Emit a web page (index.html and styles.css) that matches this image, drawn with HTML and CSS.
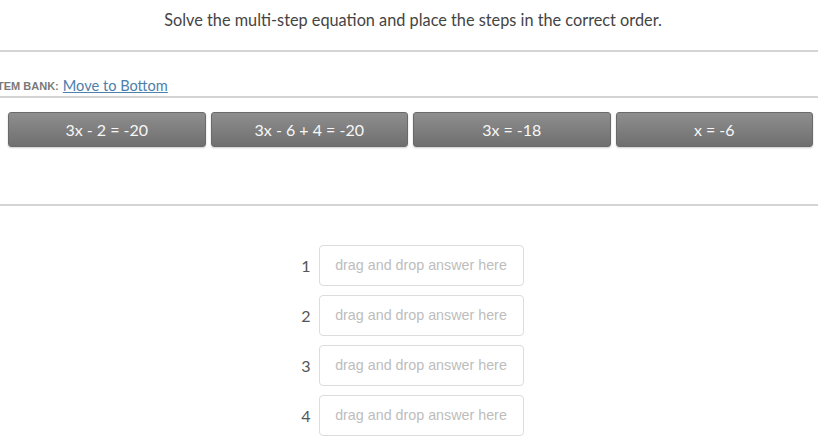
FILE: index.html
```html
<!DOCTYPE html>
<html>
<head>
<meta charset="utf-8">
<link rel="stylesheet" href="styles.css">
</head>
<body>
<div class="page">
  <p class="prompt">Solve the multi-step equation and place the steps in the correct order.</p>
  <hr class="rule">
  <div class="bank-head">
    <span class="bank-label">ITEM BANK:</span>
    <a class="bank-link" href="#">Move to Bottom</a>
  </div>
  <hr class="rule">
  <div class="bank">
    <div class="tile">3x - 2 = -20</div>
    <div class="tile">3x - 6 + 4 = -20</div>
    <div class="tile">3x = -18</div>
    <div class="tile">x = -6</div>
  </div>
  <hr class="rule">
  <ol class="slots">
    <li class="slot"><span class="num">1</span><div class="drop">drag and drop answer here</div></li>
    <li class="slot"><span class="num">2</span><div class="drop">drag and drop answer here</div></li>
    <li class="slot"><span class="num">3</span><div class="drop">drag and drop answer here</div></li>
    <li class="slot"><span class="num">4</span><div class="drop">drag and drop answer here</div></li>
  </ol>
</div>
</body>
</html>
```
FILE: styles.css
```css
html, body {
  margin: 0;
  padding: 0;
  background: #fff;
}
body {
  font-family: Lato, "Open Sans", sans-serif;
  color: #333;
  overflow: hidden;
}
.page {
  width: 818px;
}
.prompt {
  margin: 0;
  padding-top: 9px;
  height: 41px;
  text-align: center;
  font-size: 16.3px;
  line-height: 22px;
  color: #444;
  padding-left: 8px;
}
.rule {
  margin: 0;
  border: 0;
  height: 2px;
  background: #d4d4d4;
}
.bank-head {
  height: 44px;
  display: flex;
  align-items: center;
  margin-left: -6px;
  gap: 4px;
}
.bank-label {
  font-family: "Liberation Sans", Arial, sans-serif;
  font-weight: bold;
  font-size: 11px;
  color: #7a7a7a;
  padding-top: 24px;
}
.bank-link {
  font-size: 14.6px;
  color: #4d80ad;
  text-decoration: underline;
  padding-top: 22px;
}
.bank {
  display: flex;
  gap: 5px;
  padding: 14px 5px 0 8px;
  height: 106px;
  box-sizing: border-box;
}
.tile {
  flex: 1;
  height: 35px;
  box-sizing: border-box;
  border: 1px solid #6a6a6a;
  border-radius: 3px;
  background: linear-gradient(#8e8e8e, #6f6f6f);
  box-shadow: 0 1px 2px rgba(0,0,0,0.2);
  color: #f7f7f7;
  font-size: 16px;
  line-height: 33px;
  text-align: center;
}
.slots {
  list-style: none;
  margin: 0;
  padding: 39px 0 0 0;
  display: flex;
  flex-direction: column;
  align-items: center;
  gap: 9px;
}
.slot {
  display: flex;
  align-items: center;
  gap: 8px;
  margin-left: 6px;
}
.num {
  width: 10px;
  text-align: right;
  font-size: 16px;
  color: #555;
}
.drop {
  width: 205px;
  height: 41px;
  box-sizing: border-box;
  border: 1px solid #dcdcdc;
  border-radius: 4px;
  font-family: "Liberation Sans", Arial, sans-serif;
  font-size: 14.3px;
  color: #bdbdbd;
  text-align: center;
  line-height: 39px;
}
```
